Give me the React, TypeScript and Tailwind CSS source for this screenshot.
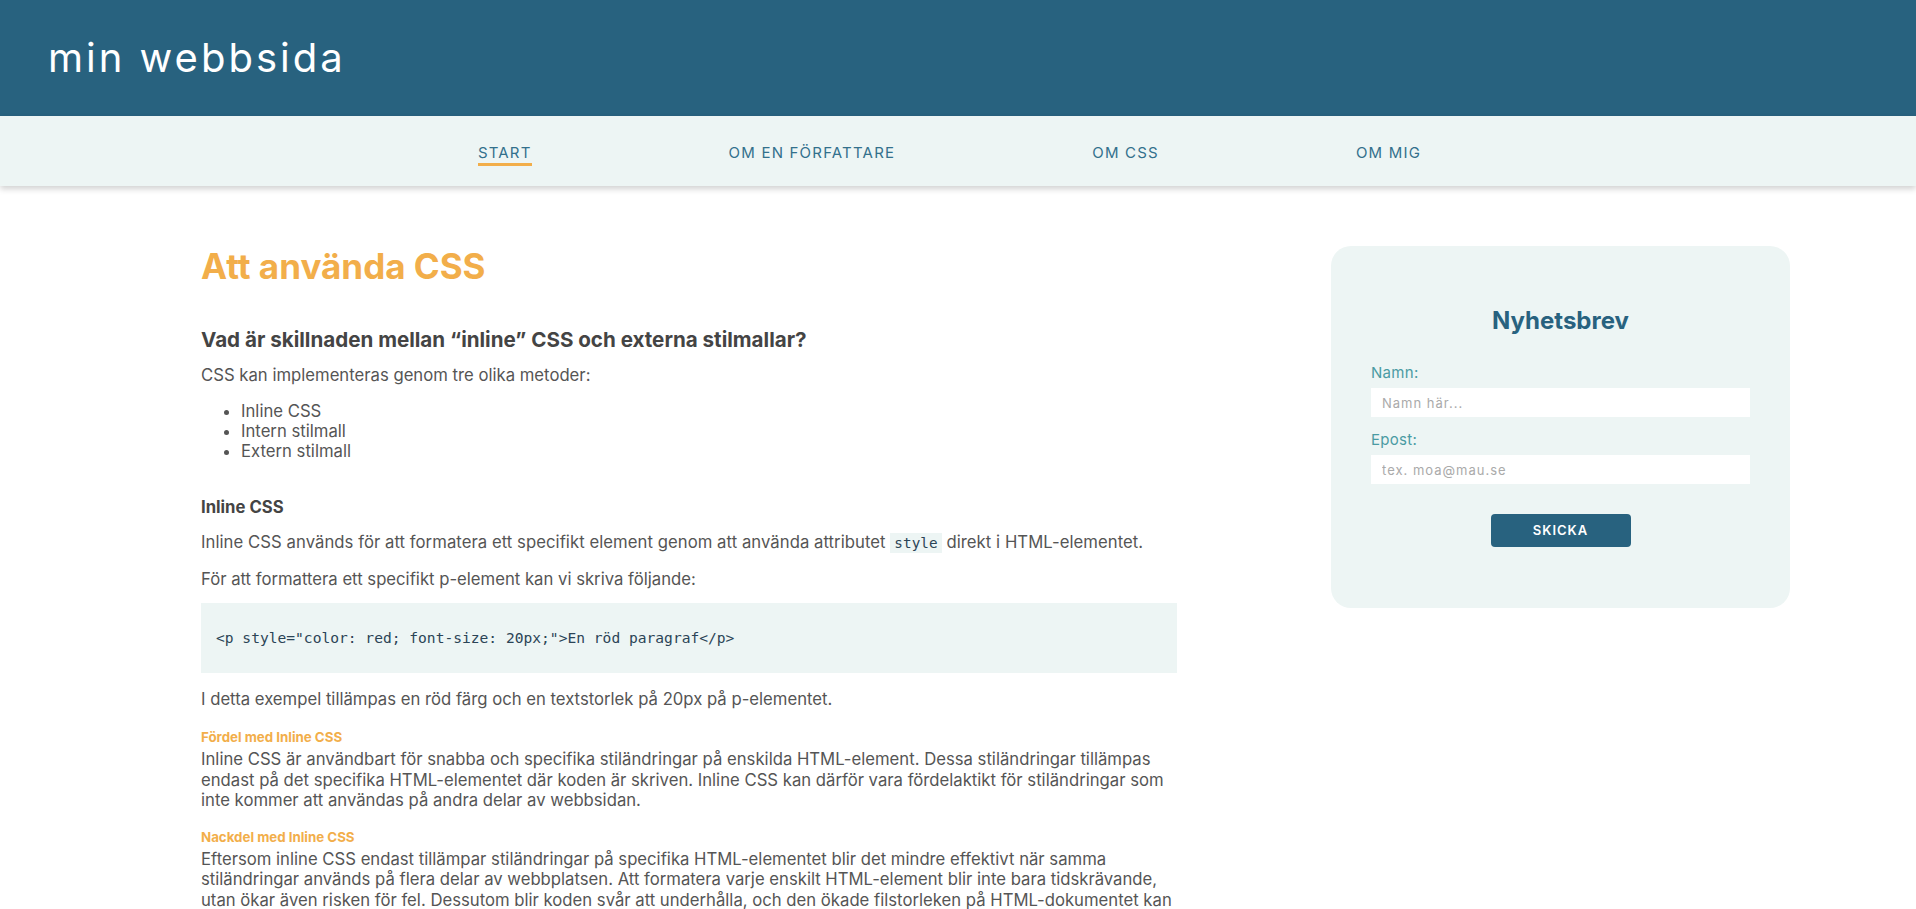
import React from 'react';

const navItems = ['START', 'OM EN FÖRFATTARE', 'OM CSS', 'OM MIG'];

const Code = ({ children }: { children: React.ReactNode }) => (
  <code className="bg-[#edf5f4] px-[4px] py-[2px] font-['DejaVu_Sans_Mono',monospace] text-[14.3px] text-[#2b4456]">
    {children}
  </code>
);

const CodeBlock = ({ children }: { children: React.ReactNode }) => (
  <pre className="mt-[12px] flex min-h-[70px] items-center bg-[#edf5f4] px-[15px] py-[14px] font-['DejaVu_Sans_Mono',monospace] text-[14.6px] leading-[20px] text-[#2b4456] whitespace-pre-wrap">
    {children}
  </pre>
);

const Sub = ({ children }: { children: React.ReactNode }) => (
  <h4 className="mt-[17px] text-[13.3px] leading-[18px] font-bold text-[#f2ae4a]">{children}</h4>
);

const Para = ({ children }: { children: React.ReactNode }) => (
  <p className="mt-[3px] leading-[20.5px]">{children}</p>
);

const Header = () => (
  <header className="flex h-[116px] items-center bg-[#28627f] pl-[48px]">
    <h1 className="text-[40px] leading-[48px] font-normal tracking-[3px] text-white">min webbsida</h1>
  </header>
);

const Nav = () => (
  <nav className="relative z-10 h-[70px] bg-[#edf5f4] pt-[27px] shadow-[0_3px_6px_rgba(0,0,0,0.18)]">
    {/* pr-[17px]: the original page is centred beside a 17px scrollbar */}
    <ul className="flex justify-center gap-[197px] pr-[17px]">
      {navItems.map((item, i) => (
        <li key={item}>
          <a
            href="#"
            className={`block border-b-[3px] text-[15px] leading-[20px] tracking-[1.2px] text-[#33708c] ${
              i === 0 ? 'border-[#f2ae4a]' : 'border-transparent'
            }`}
          >
            {item}
          </a>
        </li>
      ))}
    </ul>
  </nav>
);

const Newsletter = () => (
  <aside className="w-[459px] shrink-0 rounded-[20px] bg-[#edf5f4] px-[40px] pt-[60px] pb-[61px]">
    <h3 className="text-center text-[24px] leading-[30px] font-bold text-[#28627f]">Nyhetsbrev</h3>
    <form className="flex flex-col" onSubmit={(e) => e.preventDefault()}>
      <label className="mt-[27px] text-[15px] leading-[20px] tracking-[0.3px] text-[#4a9ba3]">Namn:</label>
      <input
        type="text"
        placeholder="Namn här..."
        className="mt-[5px] h-[29px] bg-white px-[11px] text-[13px] tracking-[1px] text-[#555] outline-none placeholder:text-[#aaa]"
      />
      <label className="mt-[13px] text-[15px] leading-[20px] tracking-[0.3px] text-[#4a9ba3]">Epost:</label>
      <input
        type="email"
        placeholder="tex. moa@mau.se"
        className="mt-[5px] h-[29px] bg-white px-[11px] text-[13px] tracking-[1px] text-[#555] outline-none placeholder:text-[#aaa]"
      />
      <button
        type="submit"
        className="mx-auto mt-[30px] h-[33px] w-[140px] rounded-[4px] bg-[#28627f] text-[13px] font-semibold tracking-[1px] text-white"
      >
        SKICKA
      </button>
    </form>
  </aside>
);

const Article = () => (
  <article className="w-[976px] shrink-0 text-[16.7px] text-[#555]">
    <h1 className="text-[35px] leading-[40px] font-bold text-[#f2ae4a]">Att använda CSS</h1>

    <h2 className="mt-[40px] text-[20.6px] leading-[28px] font-bold text-[#444]">
      Vad är skillnaden mellan “inline” CSS och externa stilmallar?
    </h2>
    <p className="mt-[9px] leading-[24px]">CSS kan implementeras genom tre olika metoder:</p>
    <ul className="mt-[14px] list-disc pl-[40px] leading-[20px]">
      <li>Inline CSS</li>
      <li>Intern stilmall</li>
      <li>Extern stilmall</li>
    </ul>

    <h3 className="mt-[34px] text-[16.7px] leading-[24px] font-bold text-[#444]">Inline CSS</h3>
    <p className="mt-[11px] leading-[24px] tracking-[0.05px]">
      Inline CSS används för att formatera ett specifikt element genom att använda attributet <Code>style</Code> direkt i HTML-elementet.
    </p>
    <p className="mt-[12px] leading-[24px]">För att formattera ett specifikt p-element kan vi skriva följande:</p>
    <CodeBlock>{'<p style="color: red; font-size: 20px;">En röd paragraf</p>'}</CodeBlock>
    <p className="mt-[14px] leading-[24px]">I detta exempel tillämpas en röd färg och en textstorlek på 20px på p-elementet.</p>

    <Sub>Fördel med Inline CSS</Sub>
    <Para>
      Inline CSS är användbart för snabba och specifika stiländringar på enskilda HTML-element. Dessa stiländringar tillämpas endast på det specifika HTML-elementet där koden är skriven. Inline CSS kan därför vara fördelaktikt för stiländringar som inte kommer att användas på andra delar av webbsidan.
    </Para>
    <Sub>Nackdel med Inline CSS</Sub>
    <Para>
      Eftersom inline CSS endast tillämpar stiländringar på specifika HTML-elementet blir det mindre effektivt när samma stiländringar används på flera delar av webbplatsen. Att formatera varje enskilt HTML-element blir inte bara tidskrävande, utan ökar även risken för fel. Dessutom blir koden svår att underhålla, och den ökade filstorleken på HTML-dokumentet kan påverka webbsidans laddningstid negativt.
    </Para>

    <h3 className="mt-[48px] text-[16.7px] leading-[24px] font-bold text-[#444]">Intern stilmall</h3>
    <p className="mt-[11px] leading-[24px]">
      En intern stilmall skrivs i ett <Code>style</Code>-element som placeras i <Code>head</Code>-elementet i HTML-dokumentet.
    </p>
    <p className="mt-[12px] leading-[24px]">För att formattera alla p-element i dokumentet kan vi skriva följande:</p>
    <CodeBlock>{'<head>\n  <style>\n    p {\n      color: red;\n      font-size: 20px;\n    }\n  </style>\n</head>'}</CodeBlock>
    <p className="mt-[14px] leading-[24px]">I detta exempel tillämpas en röd färg och en textstorlek på 20px på alla p-element i dokumentet.</p>

    <Sub>Fördel med intern stilmall</Sub>
    <Para>
      En intern stilmall gör det möjligt att samla all CSS för en sida på ett ställe. Stiländringar påverkar alla element av samma typ i dokumentet, vilket gör koden lättare att överblicka än inline CSS.
    </Para>
    <Sub>Nackdel med intern stilmall</Sub>
    <Para>
      Stilmallen gäller endast för den sida där den är skriven. Om webbplatsen består av flera sidor måste samma kod upprepas i varje dokument, vilket gör det svårare att hålla utseendet enhetligt.
    </Para>

    <h3 className="mt-[48px] text-[16.7px] leading-[24px] font-bold text-[#444]">Extern stilmall</h3>
    <p className="mt-[11px] leading-[24px]">
      En extern stilmall är en separat fil med filändelsen <Code>.css</Code> som länkas in i HTML-dokumentet med ett <Code>link</Code>-element.
    </p>
    <p className="mt-[12px] leading-[24px]">För att länka in en extern stilmall kan vi skriva följande:</p>
    <CodeBlock>{'<link rel="stylesheet" href="style.css">'}</CodeBlock>
    <p className="mt-[14px] leading-[24px]">I filen style.css skrivs sedan all CSS som ska gälla för webbplatsen.</p>
    <CodeBlock>{'p {\n  color: red;\n  font-size: 20px;\n}'}</CodeBlock>

    <Sub>Fördel med extern stilmall</Sub>
    <Para>
      En extern stilmall kan användas av alla sidor på webbplatsen. En ändring i stilmallen slår igenom överallt, vilket sparar tid och gör koden enkel att underhålla. Webbläsaren kan dessutom spara filen i sitt cacheminne, vilket ger snabbare laddningstider.
    </Para>
    <Sub>Nackdel med extern stilmall</Sub>
    <Para>
      Sidan kan inte visas med rätt utseende förrän stilmallen har laddats in. Om länken till filen är felaktig visas sidan helt utan formatering.
    </Para>

    <h2 className="mt-[48px] text-[20.6px] leading-[28px] font-bold text-[#444]">Sammanfattning</h2>
    <p className="mt-[9px] leading-[24px]">
      Inline CSS passar för enstaka och snabba ändringar, en intern stilmall för en enskild sida och en extern stilmall för hela webbplatser. I de flesta fall är en extern stilmall det bästa valet, eftersom den skiljer innehåll från utseende och gör koden lätt att underhålla.
    </p>
  </article>
);

export default function App() {
  return (
    <div className="min-h-[4400px] bg-white font-['Inter','Noto_Sans',sans-serif]">
      <Header />
      <Nav />
      <main className="flex items-start gap-[154px] pt-[60px] pl-[201px] pb-[120px]">
        <Article />
        <Newsletter />
      </main>
    </div>
  );
}
